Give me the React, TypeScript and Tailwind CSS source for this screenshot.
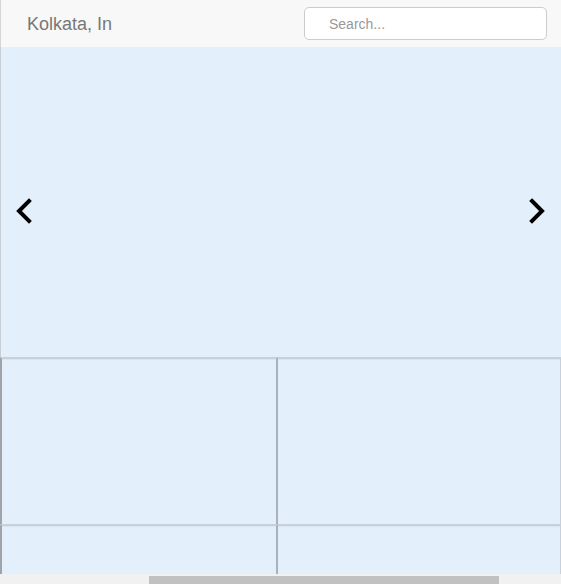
import { ReactNode } from 'react';

const Chevron = ({ dir }: { dir: 'left' | 'right' }) => (
  <svg width="18" height="28" viewBox="0 0 18 28" fill="none" className="block">
    <polyline
      points={dir === 'left' ? '14,4 4,14 14,24' : '3,4 13,14 3,24'}
      stroke="#000"
      strokeWidth="4"
      strokeLinecap="square"
      strokeLinejoin="miter"
    />
  </svg>
);

const Tile = ({ className, children }: { className?: string; children?: ReactNode }) => (
  <div
    className={`border-t-[2px] border-t-[#c8d1da] bg-[#e3f0fc] shadow-[inset_0_1px_1px_rgba(0,0,0,0.05)] ${className ?? ''}`}
  >
    {children}
  </div>
);

export default function App() {
  return (
    <div className="flex h-[584px] w-[561px] flex-col overflow-hidden bg-white font-['Liberation_Sans',Arial,sans-serif]">
      <nav className="flex h-[47px] shrink-0 items-center justify-between border-l border-l-[#d6d6d6] bg-[#f8f8f8] pl-[26px] pr-[14px]">
        <span className="text-[18px] leading-none text-[#777]">Kolkata, In</span>
        <input
          type="text"
          placeholder="Search..."
          className="h-[33px] w-[243px] rounded-[5px] border border-[#ccc] bg-white pl-[24px] text-[14px] text-[#555] placeholder:text-[#999] outline-none"
        />
      </nav>

      <div className="flex h-[310px] shrink-0 items-center justify-between border-l border-l-[#c6cdd4] bg-[#e3f0fc] pl-[14px] pr-[14px] pt-[18px]">
        <button>
          <Chevron dir="left" />
        </button>
        <button>
          <Chevron dir="right" />
        </button>
      </div>

      <div className="grid min-h-0 flex-1 grid-cols-[278px_283px] grid-rows-[167px_1fr] overflow-hidden">
        <Tile className="border-l-[2px] border-l-[#9ea4aa] border-r-[2px] border-r-[#a9b2bb]" />
        <Tile className="border-r border-r-[#c8d1da]" />
        <Tile className="border-l-[2px] border-l-[#9ea4aa] border-r-[2px] border-r-[#a9b2bb]" />
        <Tile className="border-r border-r-[#c8d1da]" />
      </div>

      <div className="flex h-[10px] shrink-0 items-end bg-[#f1f1f1] pl-[149px]">
        <div className="h-[8px] w-[350px] bg-[#c1c1c1]" />
      </div>
    </div>
  );
}
